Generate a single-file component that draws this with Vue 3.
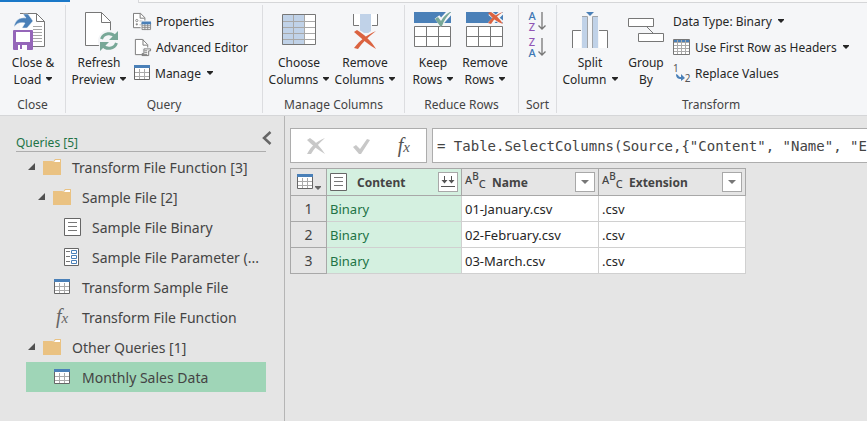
<script setup>
import { ref } from 'vue'

const formula = ref('= Table.SelectColumns(Source,{"Content", "Name", "Extension"})')

const queries = [
  { label: 'Transform File Function [3]', icon: 'folder', level: 0, open: true },
  { label: 'Sample File [2]', icon: 'folder', level: 1, open: true },
  { label: 'Sample File Binary', icon: 'list', level: 2 },
  { label: 'Sample File Parameter (...', icon: 'param', level: 2 },
  { label: 'Transform Sample File', icon: 'table', level: 1 },
  { label: 'Transform File Function', icon: 'fx', level: 1 },
  { label: 'Other Queries [1]', icon: 'folder', level: 0, open: true },
  { label: 'Monthly Sales Data', icon: 'table', level: 1 },
]
const selected = ref(7)

const rows = [
  { content: 'Binary', name: '01-January.csv', ext: '.csv' },
  { content: 'Binary', name: '02-February.csv', ext: '.csv' },
  { content: 'Binary', name: '03-March.csv', ext: '.csv' },
]
</script>

<template>
  <svg class="sprite" aria-hidden="true">
    <symbol id="close-load" viewBox="0 0 40 40">
      <path d="M7 1.5H24L31.500 9V34.500H7Z" fill="#fff" />
      <path d="M7 1.500H23.500L31.500 9.500V34.500H20M23.500 1.500V9.500H31.500" fill="none" stroke="#777" />
      <path d="M20 14.500H29M20 17.500H29M20 20.500H29M20 23.500H29M20 26.500H29M20 29.500H29" stroke="#a5a5a5" />
      <path d="M1 15C2 8 7 5 13 6L10 2H15L20 9L14 16H9L12 11C7 10 4 11 1 15Z" fill="#4a80b8" stroke="#f5f6f8" stroke-width=".5" />
      <path d="M0 19Q0 18 1 18H19Q20 18 20 19V37Q20 38 19 38H1Q0 38 0 37Z" fill="#9566b9" />
      <path d="M3 20H17V30H3ZM5 33H14V38H5Z" fill="#fff" />
      <path d="M7 33H9V37H7Z" fill="#9566b9" />
    </symbol>
    <symbol id="refresh" viewBox="0 0 40 40">
      <path d="M6.500 .500H22.500L31.500 9.500V33.500H6.500Z" fill="#fff" stroke="#777" />
      <path d="M22.500 .500V10.500H31.500" fill="none" stroke="#777" />
      <circle cx="30" cy="29" r="11" fill="#f5f6f8" />
      <g fill="none" stroke="#78a898" stroke-width="3">
        <path d="M22.500 27A8 8 0 0 1 36.500 25" />
        <path d="M37.500 31A8 8 0 0 1 23.500 33" />
      </g>
      <path d="M39 19V28H30ZM21 39V30H30Z" fill="#78a898" />
    </symbol>
    <symbol id="choose-cols" viewBox="0 0 40 40">
      <path d="M3 3H36V33H3Z" fill="#fff" />
      <path d="M3 3H25V33H3Z" fill="#c0d2e8" />
      <path d="M14.500 3V33M25.500 3V33M3 9.500H36M3 15.500H36M3 21.500H36M3 27.500H36" stroke="#a8a8a8" />
      <path d="M3.500 2.500H36.500V32.500H3.500Z" fill="none" stroke="#777" />
    </symbol>
    <symbol id="remove-cols" viewBox="0 0 40 40">
      <path d="M8 2H33V13H8Z" fill="#fff" />
      <path d="M8.500 2V13.500H14M32.500 2V13.500H27" fill="none" stroke="#777" />
      <path d="M15 2H26V21H15Z" fill="#c0d2e8" />
      <path d="M10 19C18 23 25 30 30 37M30 20C22 25 15 31 11 37" fill="none" stroke="#f5f6f8" stroke-width="6" />
      <path d="M9 20L12 18C20 23 26 29 31 37C24 33 17 27 9 20Z" fill="#db6341" />
      <path d="M31 19C23 25 17 31 13 37L9 36C15 28 22 23 31 19Z" fill="#db6341" />
    </symbol>
    <symbol id="row-grid" viewBox="0 0 40 40">
      <path d="M1 0H38V11H1Z" fill="#4a80b8" />
      <path d="M1.500 14.500H37.500V34.500H1.500ZM1.500 24.500H37.500M13.500 14V35M25.500 14V35" fill="#fff" stroke="#777" />
    </symbol>
    <symbol id="keep-rows" viewBox="0 0 40 40">
      <use href="#row-grid" />
      <path d="M24 5L28 10L37 0" fill="none" stroke="#f5f6f8" stroke-width="6" />
      <path d="M22 7L25 5L28 9C31 4 34 1 39 -1C35 3 31 8 29 14H27Z" fill="#78a898" />
    </symbol>
    <symbol id="remove-rows" viewBox="0 0 40 40">
      <use href="#row-grid" />
      <path d="M25 1L37 11M37 0L25 12" fill="none" stroke="#f5f6f8" stroke-width="5" />
      <path d="M23 1L26 0C31 3 35 7 38 12C32 10 27 6 23 1Z" fill="#db6341" />
      <path d="M38 0C33 3 29 7 26 12L23 11C27 5 32 2 38 0Z" fill="#db6341" />
    </symbol>
    <symbol id="split-col" viewBox="0 0 40 40">
      <path d="M2.500 36V18.500H11V36M29 36V18.500H37.500V36" fill="#fff" />
      <path d="M2.500 36V18.500H11M29 18.500H37.500V36" fill="none" stroke="#777" />
      <path d="M12 4H17V36H12ZM23 4H28V36H23Z" fill="#c0d2e8" />
      <path d="M12 4.500H17.500V36M28 4.500H22.500V36" fill="none" stroke="#a0a4a8" />
      <path d="M16 0H24L20 4Z" fill="#4a80b8" />
    </symbol>
    <symbol id="group-by" viewBox="0 0 40 40">
      <path d="M2.500 6.500H27.500V14.500H2.500ZM12.500 21.500H37.500V29.500H12.500ZM21 15L27 21" fill="#fff" stroke="#777" />
    </symbol>
    <symbol id="properties" viewBox="0 0 20 20">
      <path d="M.500 1.500H8L12.500 6V16.500H.500Z" fill="#fff" stroke="#777" />
      <path d="M7.500 1.500V6.500H12" fill="none" stroke="#777" />
      <path d="M7 9.500H10M7 13.500H9" stroke="#999" />
      <circle cx="4" cy="9" r="1.200" fill="#fff" stroke="#888" />
      <circle cx="4" cy="13" r="1.200" fill="#888" />
      <path d="M8 9H20V19H8Z" fill="#f5f6f8" />
      <path d="M9.500 11.500H18.500V18.500H9.500ZM9.500 14.500H18.500M9.500 16.500H18.500M12.500 11V19M15.500 11V19" fill="#fff" stroke="#888" />
      <path d="M9 10H19V13H9Z" fill="#4a80b8" />
    </symbol>
    <symbol id="editor" viewBox="0 0 20 20">
      <path d="M2.500 1.500H10L15.500 7V17.500H2.500Z" fill="#fff" stroke="#777" />
      <path d="M10.500 1.500V7.500H15" fill="none" stroke="#777" />
      <path d="M9 10H20V20H9Z" fill="#f5f6f8" />
      <path d="M11.500 11.500H18.500V13.500H16.500V18.500H9.500V16.500H11.500Z" fill="#fff" stroke="#777" />
      <path d="M12 13.500H15M12 15.500H15M9 17.500H15" stroke="#777" />
    </symbol>
    <symbol id="table" viewBox="0 0 16 16">
      <path d="M.500 1.500H15.500V14.500H.500Z" fill="#fff" stroke="#666" />
      <path d="M5.500 4V14M10.500 4V14M1 7.500H15M1 11.500H15" stroke="#aaa" />
      <path d="M0 0H16V3H0Z" fill="#4a80b8" />
    </symbol>
    <symbol id="headers" viewBox="0 0 18 18">
      <path d="M.500 1.500H16.500V16.500H.500Z" fill="#fff" />
      <path d="M1 2H16V4H1Z" fill="#4a80b8" />
      <path d="M4.500 1V16M8.500 1V16M12.500 1V16M1 4.500H16M1 7.500H16M1 10.500H16M1 13.500H16" stroke="#aaa" />
      <path d="M.500 1.500H16.500V16.500H.500Z" fill="none" stroke="#777" />
    </symbol>
    <symbol id="folder" viewBox="0 0 18 16">
      <path d="M10 3L12 0H18V4H10Z" fill="#eac282" />
      <path d="M11 3L12.500 1H17V3Z" fill="#fff" />
      <path d="M0 2H9.500L11 4H18V16H0Z" fill="#eac282" />
    </symbol>
    <symbol id="list" viewBox="0 0 17 18">
      <path d="M.500 .500H16.500V17.500H.500Z" fill="#fff" stroke="#666" />
      <path d="M4 4.500H13M4 8.500H13M4 12.500H13" stroke="#777" />
    </symbol>
    <symbol id="param" viewBox="0 0 16 18">
      <path d="M.500 .500H14.500V17.500H.500Z" fill="#fff" stroke="#666" />
      <path d="M2 3.500H6M2 8.500H6M2 13.500H6" stroke="#777" />
      <path d="M7.500 2.500H12.500V5.500H7.500ZM7.500 7.500H12.500V10.500H7.500ZM7.500 12.500H12.500V15.500H7.500Z" fill="#fff" stroke="#4a80b8" />
    </symbol>
    <symbol id="caret" viewBox="0 0 6 4"><path d="M0 0H6V1L3 4L0 1Z" fill="currentColor" /></symbol>
    <symbol id="sort-arrow" viewBox="0 0 8 20">
      <path d="M4 1V18M.500 14.500L4 18L7.500 14.500" fill="none" stroke="#777" stroke-width="1.300" />
    </symbol>
    <symbol id="swap" viewBox="0 0 9 7">
      <path d="M0 0L2 1C3 3 4 3 5 3V0L9 4L5 7V5C2 5 0 4 0 0Z" fill="#4a80b8" />
    </symbol>
  </svg>

  <div class="app">
    <header class="ribbon">
      <div class="tabs"><span class="tab-file"></span><span class="tab-home"></span><span class="tab-rest"></span></div>
      <div class="groups">
        <section class="group g-close">
          <div class="tools">
            <button class="big"><svg><use href="#close-load" /></svg><span>Close &amp;<br />Load <svg class="caret"><use href="#caret" /></svg></span></button>
          </div>
          <h2>Close</h2>
        </section>
        <section class="group g-query">
          <div class="tools">
            <button class="big"><svg><use href="#refresh" /></svg><span>Refresh<br />Preview <svg class="caret"><use href="#caret" /></svg></span></button>
            <div class="stack">
              <button class="small"><svg><use href="#properties" /></svg>Properties</button>
              <button class="small"><svg><use href="#editor" /></svg>Advanced Editor</button>
              <button class="small"><svg class="sixteen"><use href="#table" /></svg>Manage <svg class="caret"><use href="#caret" /></svg></button>
            </div>
          </div>
          <h2>Query</h2>
        </section>
        <section class="group g-columns">
          <div class="tools">
            <button class="big"><svg><use href="#choose-cols" /></svg><span>Choose<br />Columns <svg class="caret"><use href="#caret" /></svg></span></button>
            <button class="big"><svg><use href="#remove-cols" /></svg><span>Remove<br />Columns <svg class="caret"><use href="#caret" /></svg></span></button>
          </div>
          <h2>Manage Columns</h2>
        </section>
        <section class="group g-rows">
          <div class="tools">
            <button class="big"><svg><use href="#keep-rows" /></svg><span>Keep<br />Rows <svg class="caret"><use href="#caret" /></svg></span></button>
            <button class="big"><svg><use href="#remove-rows" /></svg><span>Remove<br />Rows <svg class="caret"><use href="#caret" /></svg></span></button>
          </div>
          <h2>Reduce Rows</h2>
        </section>
        <section class="group g-sort">
          <div class="tools">
            <div class="stack">
              <button class="sort" aria-label="Sort ascending"><span><b class="blue">A</b><b class="purple">Z</b></span><svg><use href="#sort-arrow" /></svg></button>
              <button class="sort" aria-label="Sort descending"><span><b class="purple">Z</b><b class="blue">A</b></span><svg><use href="#sort-arrow" /></svg></button>
            </div>
          </div>
          <h2>Sort</h2>
        </section>
        <section class="group g-transform">
          <div class="tools">
            <button class="big"><svg><use href="#split-col" /></svg><span>Split<br />Column <svg class="caret"><use href="#caret" /></svg></span></button>
            <button class="big group-by"><svg><use href="#group-by" /></svg><span>Group<br />By</span></button>
            <div class="stack">
              <button class="small">Data Type: Binary <svg class="caret"><use href="#caret" /></svg></button>
              <button class="small"><svg class="eighteen"><use href="#headers" /></svg>Use First Row as Headers <svg class="caret"><use href="#caret" /></svg></button>
              <button class="small"><span class="replace"><i>1</i><svg><use href="#swap" /></svg><i>2</i></span>Replace Values</button>
            </div>
          </div>
          <h2>Transform</h2>
        </section>
      </div>
    </header>

    <div class="workspace">
      <aside class="sidebar">
        <div class="side-head">
          <h3>Queries [5]</h3>
          <button class="collapse" aria-label="Collapse queries">
            <svg viewBox="0 0 10 14"><path d="M8.500 1L2 7L8.500 13" fill="none" stroke="#666" stroke-width="2.500" /></svg>
          </button>
        </div>
        <ul>
          <li v-for="(q, i) in queries" :key="i">
            <button :class="['query', 'level-' + q.level, { selected: i === selected }]" @click="selected = i">
              <svg class="twisty" viewBox="0 0 8 8"><path v-if="q.open" d="M7 0V7H0Z" fill="#505050" /></svg>
              <span class="q-icon">
                <span v-if="q.icon === 'fx'" class="fx"><i>f</i><i class="x">x</i></span>
                <svg v-else :class="q.icon"><use :href="'#' + q.icon" /></svg>
              </span>
              <span class="q-label">{{ q.label }}</span>
            </button>
          </li>
        </ul>
      </aside>

      <main class="content">
        <div class="formula-bar">
          <div class="formula-tools">
            <button aria-label="Cancel"><svg viewBox="0 0 20 18"><path d="M1 3L4 1C10 5 15 11 19 17C12 13 6 8 1 3Z" fill="#c8c8c8" /><path d="M19 1C13 6 8 12 5 17H1C5 9 11 4 19 1Z" fill="#c8c8c8" /></svg></button>
            <button aria-label="Accept"><svg viewBox="0 0 20 18"><path d="M1 10L4 8L8 12L15 2L18 3L9 17H7Z" fill="#c8c8c8" /></svg></button>
            <button aria-label="Insert step"><span class="fx large"><i>f</i><i class="x">x</i></span></button>
          </div>
          <input v-model="formula" class="formula" aria-label="Formula" spellcheck="false" />
        </div>

        <table class="grid">
          <colgroup><col class="c-num" /><col class="c-content" /><col class="c-name" /><col class="c-ext" /></colgroup>
          <thead>
            <tr>
              <th>
                <button class="corner" aria-label="Table options"><svg class="sixteen"><use href="#table" /></svg><svg class="caret"><use href="#caret" /></svg></button>
              </th>
              <th class="active">
                <div class="col-head"><svg class="list"><use href="#list" /></svg><span>Content</span>
                  <button class="col-btn combine" aria-label="Combine files"><svg viewBox="0 0 16 14"><path d="M4.500 1V8M11.500 1V8" stroke="#555" /><path d="M1.500 5H7.500L4.500 8.500ZM8.500 5H14.500L11.500 8.500Z" fill="#555" /><path d="M1 11.500H15" stroke="#555" /></svg></button>
                </div>
              </th>
              <th v-for="c in ['Name', 'Extension']" :key="c">
                <div class="col-head"><span class="abc" aria-hidden="true"><b>A</b><b>B</b><b>C</b></span><span>{{ c }}</span>
                  <button class="col-btn" :aria-label="'Filter ' + c"><svg class="drop" viewBox="0 0 8 4"><path d="M0 0H8L4 4Z" fill="#777" /></svg></button>
                </div>
              </th>
            </tr>
          </thead>
          <tbody>
            <tr v-for="(r, i) in rows" :key="i">
              <th scope="row">{{ i + 1 }}</th>
              <td class="active">{{ r.content }}</td>
              <td>{{ r.name }}</td>
              <td>{{ r.ext }}</td>
            </tr>
          </tbody>
        </table>
      </main>
    </div>
  </div>
</template>

<style>
html, body { background: #e5e5e5; }
#app { overflow: hidden; }
</style>

<style scoped>
* { box-sizing: border-box; }
.sprite { position: absolute; width: 0; height: 0; }
.app { display: flex; flex-direction: column; min-height: 100vh; font-family: "Noto Sans", "Open Sans", sans-serif; font-size: 12px; color: #262626; background: #e5e5e5; }
button { font: inherit; color: inherit; background: none; border: 0; padding: 0; margin: 0; }
svg { flex: none; overflow: visible; }
.sixteen { width: 16px; height: 16px; }

.ribbon { background: #f5f6f8; border-bottom: 1px solid #d5d6d8; }
.tabs { display: flex; height: 3px; }
.tab-file { width: 70px; height: 2px; background: #1a78c8; }
.tab-home { width: 69px; border-right: 1px solid #d8d9dc; }
.tab-rest { flex: 1; background: #fafafa; border-bottom: 1px solid #d5d6d8; }
.groups { display: flex; padding: 2px 0; }
.group { display: flex; flex: none; flex-direction: column; border-right: 1px solid #dcdde0; }
.group h2 { margin: 0; font-size: 12px; font-weight: 400; line-height: 16px; text-align: center; color: #444; white-space: nowrap; }
.tools { display: flex; height: 92px; }
.g-close { width: 66px; }
.g-query { width: 197px; }
.g-columns { width: 142px; }
.g-rows { width: 114px; }
.g-sort { width: 38px; }
.g-transform { width: 310px; flex: 1 0 auto; border-right: 0; }
.g-transform h2 { width: 308px; }
.big { display: flex; flex: none; flex-direction: column; align-items: center; gap: 2px; width: 66px; padding-top: 7px; line-height: 17px; white-space: nowrap; }
.big > svg { width: 40px; height: 40px; }
.g-columns .tools { padding-left: 3px; }
.g-rows .tools { padding-left: 2px; }
.g-rows .big { width: 52px; }
.group-by { width: 46px; }
.caret { width: 6px; height: 4px; vertical-align: 3px; margin-left: 2px; }
.stack { display: flex; flex-direction: column; padding-top: 3px; }
.g-transform .stack { padding-left: 4px; }
.small { display: flex; align-items: center; gap: 4px; height: 26px; white-space: nowrap; }
.small > svg:not(.caret) { width: 19px; height: 19px; }
.small > svg.sixteen { width: 18px; height: 16px; }
.small > svg.eighteen { width: 18px; height: 18px; }
.g-query .stack { padding-left: 1px; }
.replace { display: flex; width: 18px; height: 20px; font-size: 10px; line-height: 10px; color: #555; }
.replace i { font-style: normal; }
.replace i:last-child { align-self: flex-end; }
.replace svg { width: 9px; height: 7px; margin: 11px 0 0 -3px; }
.sort { display: flex; align-items: center; gap: 2px; height: 26px; padding-left: 9px; }
.sort span { display: flex; flex-direction: column; width: 8px; }
.sort b { font-size: 11px; font-weight: 500; line-height: 11px; }
.sort svg { width: 8px; height: 20px; }
.blue { color: #3d77b5; }
.purple { color: #9055b5; }

.workspace { display: flex; flex: 1; }
.sidebar { flex: none; width: 285px; border-right: 1px solid #b5b5b5; padding: 13px 18px 0 16px; }
.side-head { display: flex; align-items: center; justify-content: space-between; height: 23px; border-bottom: 1px solid #adadad; }
.side-head h3 { margin: 6px 0 0; font-size: 12px; font-weight: 400; line-height: 16px; color: #217346; }
.collapse { height: 20px; margin-right: -6px; }
.collapse svg { width: 10px; height: 14px; }
ul { list-style: none; margin: 0; padding: 0 0 0 10px; }
.query { display: flex; align-items: center; width: 100%; height: 30px; padding-left: 2px; font-size: 14px; color: #444; text-align: left; white-space: nowrap; }
.level-1 { padding-left: 12px; }
.level-2 { padding-left: 22px; }
.selected { background: #9fd5b7; }
.twisty { width: 8px; height: 8px; }
.q-icon { display: flex; width: 18px; margin: 0 11px 0 7px; justify-content: center; }
.q-icon .folder { width: 18px; height: 16px; }
.q-icon .list { width: 17px; height: 18px; }
.q-icon .param { width: 16px; height: 18px; }
.q-icon .table { width: 16px; height: 16px; }
.fx { font-family: "Liberation Serif", serif; font-size: 20px; line-height: 20px; color: #666; }
.fx .x { font-size: 15px; }
.fx.large { color: #555; }

.content { flex: 1; min-width: 0; padding: 12px 0 0 5px; }
.formula-bar { display: flex; gap: 5px; height: 35px; }
.formula-tools { display: flex; flex: none; align-items: center; justify-content: space-between; width: 137px; padding: 0 16px 0 15px; background: #fff; border: 1px solid #adadad; }
.formula-tools svg { display: block; width: 20px; height: 18px; }
.formula { flex: 1; min-width: 0; padding: 0 0 0 4px; border: 1px solid #adadad; border-right: 0; border-radius: 0; outline: 0; background: #fff; font-family: "DejaVu Sans Mono", monospace; font-size: 14px; color: #444; }

.grid { width: 456px; margin-top: 5px; table-layout: fixed; border-collapse: collapse; background: #fff; border-top: 1px solid #adadad; }
.c-num { width: 36px; }
.c-content { width: 135px; }
.c-name { width: 137px; }
.c-ext { width: 147px; }
.grid th, .grid td { height: 26px; padding: 0; border: 1px solid #d0d0d0; }
.grid td { padding-left: 3px; font-size: 13px; text-align: left; line-height: 16px; }
.grid thead th { height: 27px; background: #e5e5e5; border-color: #a8a8a8; }
.grid tbody th { background: #e5e5e5; border-color: #a8a8a8; font-size: 14px; font-weight: 400; line-height: 16px; color: #444; }
.grid .active, .grid thead .active { background: #d4f0e0; }
.grid td.active { color: #217346; }
.corner { display: flex; align-items: flex-end; padding-left: 6px; color: #666; }
.col-head { display: flex; align-items: center; padding: 0 3px; color: #444; }
.col-head .list { width: 17px; height: 18px; margin-right: 10px; }
.col-btn { display: flex; align-items: center; justify-content: center; width: 20px; height: 20px; margin-left: auto; background: #fff; border: 1px solid #a8a8a8; }
.col-btn svg { width: 16px; height: 14px; }
.col-btn .drop { width: 8px; height: 4px; }
.abc { display: flex; width: 20px; margin-right: 7px; font-size: 11px; line-height: 12px; }
.abc b { font-weight: 500; }
.abc b:nth-child(2) { margin-top: -4px; font-size: 10px; }
.abc b:nth-child(3) { margin-top: 4px; }
</style>
